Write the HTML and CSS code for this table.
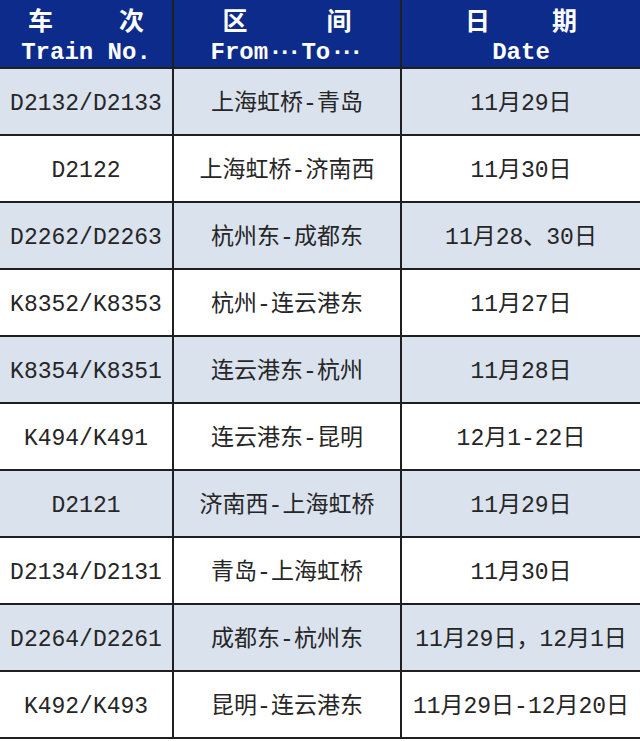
FILE: index.html
```html
<!DOCTYPE html>
<html lang="zh-CN">
<head>
<meta charset="utf-8">
<title>列车开行表</title>
<link rel="stylesheet" href="styles.css">
</head>
<body>
<div class="table">
  <div class="th">
    <div class="zh gap-a"><span>车</span><span>次</span></div>
    <div class="en">Train No.</div>
  </div>
  <div class="th">
    <div class="zh gap-b"><span>区</span><span>间</span></div>
    <div class="en">From<span class="dots">···</span>To<span class="dots">···</span></div>
  </div>
  <div class="th">
    <div class="zh gap-c"><span>日</span><span>期</span></div>
    <div class="en">Date</div>
  </div>

  <div class="td alt">D2132/D2133</div><div class="td alt">上海虹桥-青岛</div><div class="td alt">11月29日</div>
  <div class="td">D2122</div><div class="td">上海虹桥-济南西</div><div class="td">11月30日</div>
  <div class="td alt">D2262/D2263</div><div class="td alt">杭州东-成都东</div><div class="td alt">11月28、30日</div>
  <div class="td">K8352/K8353</div><div class="td">杭州-连云港东</div><div class="td">11月27日</div>
  <div class="td alt">K8354/K8351</div><div class="td alt">连云港东-杭州</div><div class="td alt">11月28日</div>
  <div class="td">K494/K491</div><div class="td">连云港东-昆明</div><div class="td">12月1-22日</div>
  <div class="td alt">D2121</div><div class="td alt">济南西-上海虹桥</div><div class="td alt">11月29日</div>
  <div class="td">D2134/D2131</div><div class="td">青岛-上海虹桥</div><div class="td">11月30日</div>
  <div class="td alt">D2264/D2261</div><div class="td alt">成都东-杭州东</div><div class="td alt">11月29日，12月1日</div>
  <div class="td">K492/K493</div><div class="td">昆明-连云港东</div><div class="td">11月29日-12月20日</div>
</div>
</body>
</html>
```

FILE: styles.css
```css
html, body {
  margin: 0;
  padding: 0;
  background: #ffffff;
}

.table {
  width: 640px;
  display: grid;
  grid-template-columns: 172px 226px 238px;
  grid-template-rows: 67px repeat(10, 65px);
  column-gap: 2px;
  row-gap: 2px;
  padding-bottom: 2px;
  background: #1f1f22;
}

.th {
  background: #0c2b8b;
  color: #ffffff;
  display: flex;
  flex-direction: column;
  align-items: center;
  justify-content: flex-start;
  padding-top: 5px;
}

.zh {
  display: flex;
  font-family: "Noto Sans CJK SC", sans-serif;
  font-weight: 700;
  font-size: 25px;
  line-height: 28px;
}

.gap-a { gap: 66px; }
.gap-b { gap: 79px; }
.gap-c { gap: 62px; }

.en {
  font-family: "Liberation Mono", monospace;
  font-weight: 700;
  font-size: 24px;
  line-height: 26px;
  margin-top: 7px;
  white-space: nowrap;
}

.dots {
  letter-spacing: -5px;
  margin-right: 5px;
}

.td {
  background: #ffffff;
  color: #262626;
  display: flex;
  align-items: center;
  justify-content: center;
  padding-top: 5px;
  font-family: "Liberation Mono", "Noto Sans CJK SC", monospace;
  font-size: 23px;
  line-height: 30px;
  white-space: nowrap;
}

.td.alt {
  background: #dae2ee;
}
```
